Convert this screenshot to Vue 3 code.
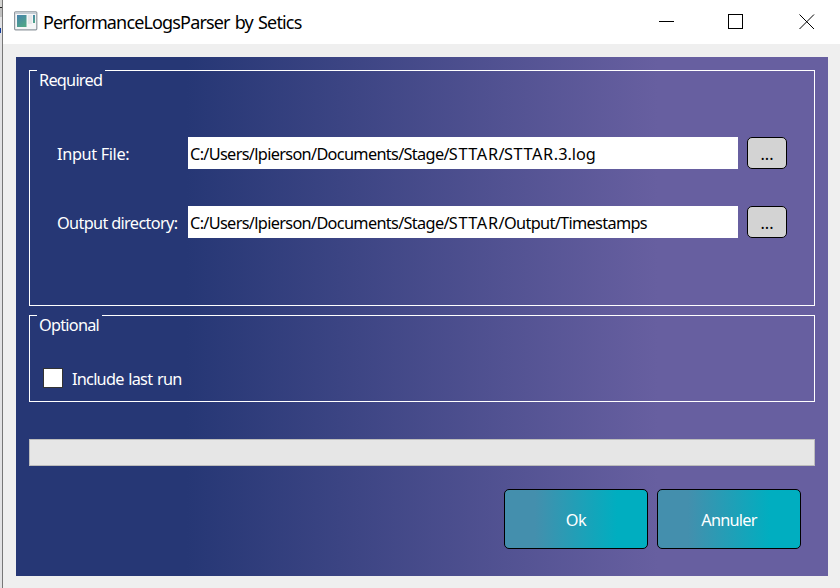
<script setup>
import { ref } from 'vue'

const fields = ref([
  { label: 'Input File:', value: 'C:/Users/lpierson/Documents/Stage/STTAR/STTAR.3.log', kind: 'input' },
  { label: 'Output directory:', value: 'C:/Users/lpierson/Documents/Stage/STTAR/Output/Timestamps', kind: 'output' },
])

// Runs of capitals are tracked wider than the lowercase parts of a path.
const parts = (path) => path.split(/([A-Z]{2,}|\.\d\.log)/).filter(Boolean).map((text) => ({
  text,
  kind: /^[A-Z]{2,}/.test(text) ? 'caps' : text.startsWith('.') ? 'ext' : 'plain',
}))
</script>

<template>
  <div class="screen">
    <div class="behind">
      <div class="behind-head"></div>
      <div class="behind-bar"></div>
      <div class="behind-mark"></div>
    </div>
    <div class="window">
      <header class="titlebar">
        <svg class="app-icon" width="24" height="20" viewBox="0 0 24 20">
          <defs>
            <linearGradient id="pane" x1="0" y1="0" x2="0.6" y2="1">
              <stop offset="0" stop-color="#4682ae" />
              <stop offset="1" stop-color="#4fa587" />
            </linearGradient>
          </defs>
          <rect x="0.6" y="0.8" width="22.2" height="18" rx="1" fill="#f5f6f7" stroke="#8f979e" stroke-width="1.2" />
          <rect x="1.2" y="1.4" width="21" height="1.6" fill="#c5cdd5" />
          <rect x="3" y="4" width="9.5" height="12" fill="url(#pane)" />
          <rect x="14" y="4" width="4" height="9" fill="#e6e7e9" />
          <rect x="19" y="4" width="2" height="8" fill="url(#pane)" />
        </svg>
        <h1 class="title">PerformanceLogsParser by Setics</h1>
        <svg class="controls" width="156" height="16" viewBox="0 0 156 16" fill="none" stroke="#000" shape-rendering="crispEdges">
          <path d="M0 7.5H15" />
          <path d="M69.5 .5H83.5V14.5H69.5Z" />
          <path d="M140.5 .5L155 15M155 .5L140.5 15" shape-rendering="auto" stroke-width="1" />
        </svg>
      </header>
      <main class="panel">
        <section class="group required">
          <h2 class="legend">Required</h2>
          <div v-for="f in fields" :key="f.label" class="row">
            <span class="label" :class="f.kind">{{ f.label }}</span>
            <div class="field" :class="f.kind"><span v-for="(p, i) in parts(f.value)" :key="i" :class="p.kind">{{ p.text }}</span></div>
            <button class="browse">...</button>
          </div>
        </section>
        <section class="group optional">
          <h2 class="legend">Optional</h2>
          <label class="check"><span class="box"></span><span class="check-text">Include last run</span></label>
        </section>
        <div class="progress"></div>
        <footer class="actions">
          <button class="action">Ok</button>
          <button class="action cancel">Annuler</button>
        </footer>
      </main>
    </div>
  </div>
</template>

<style>
body { overflow: hidden; }
</style>

<style scoped>
* { box-sizing: border-box; }
.screen {
  display: flex;
  width: 840px;
  height: 588px;
  font-family: "Noto Sans", sans-serif;
  font-size: 16.3px;
  letter-spacing: -0.66px;
  white-space: nowrap;
}
.behind { width: 3px; flex: none; background: #e2e2e4; border-right: 1px solid #777; }
.behind-head { height: 8px; background: #d4d4d2; border-bottom: 1px solid #222; }
.behind-bar { height: 9px; background: #c0c0c0; }
.behind-mark { width: 1px; height: 5px; margin-top: 11px; background: #113a9a; }
.window { flex: 1; min-width: 0; background: #efefef; }
.titlebar {
  display: flex;
  height: 44px;
  padding: 11px 25px 0 11px;
  background: #fff;
}
.app-icon { flex: none; }
.title {
  margin: 0 auto 0 5px;
  font-size: 18px;
  font-weight: 400;
  line-height: 23px;
  letter-spacing: -0.85px;
  word-spacing: 1.3px;
}
.controls { flex: none; margin-top: 3px; }
.panel {
  width: 812px;
  height: 519px;
  margin: 13px 0 0 13px;
  padding: 13px;
  background: linear-gradient(90deg, #263775 0%, #263775 21%, #675fa0 79%, #675fa0 100%);
  color: #fff;
}
.group { position: relative; border: 1px solid #fff; }
.legend {
  position: absolute;
  left: 7px;
  top: -2px;
  height: 24px;
  margin: 0;
  padding: 0 2px;
  background: #263775;
  font-size: 16.3px;
  font-weight: 400;
  line-height: 22px;
  letter-spacing: -0.75px;
}
.required { height: 236px; padding: 66px 27px 0; }
.required .legend { width: 68px; }
.row { display: flex; height: 32px; margin-bottom: 37px; }
.label { width: 131px; line-height: 35px; }
.label.input { letter-spacing: -0.35px; }
.field {
  width: 550px;
  padding-left: 2px;
  background: #fff;
  color: #000;
  line-height: 35px;
}
.caps { letter-spacing: 0.6px; }
.ext { letter-spacing: 0; }
.browse {
  width: 40px;
  margin-left: 9px;
  padding: 0;
  border: 1px solid #000;
  border-radius: 5px;
  background: #d3d3d3;
  color: #000;
  font: 16.3px/32px "Noto Sans", sans-serif;
}
.optional { height: 87px; margin-top: 9px; padding: 52px 13px 0; }
.optional .legend { width: 65px; }
.check { display: flex; }
.box { width: 20px; height: 20px; border: 1px solid #333; background: #fff; }
.check-text { margin-left: 9px; line-height: 22px; letter-spacing: -0.75px; word-spacing: 1.2px; }
.progress { height: 27px; margin-top: 37px; border: 1px solid #bcbcbc; background: #e6e6e6; }
.actions { display: flex; justify-content: flex-end; gap: 9px; margin-top: 23px; padding-right: 14px; }
.action {
  width: 144px;
  height: 60px;
  padding: 1px 0 0;
  border: 1px solid #000;
  border-radius: 5px;
  background: linear-gradient(90deg, #448fad 0%, #448fad 21%, #00aec0 79%, #00aec0 100%);
  color: #fff;
  font: 16.3px "Noto Sans", sans-serif;
  letter-spacing: -0.4px;
}
.cancel { letter-spacing: -0.75px; }
</style>
